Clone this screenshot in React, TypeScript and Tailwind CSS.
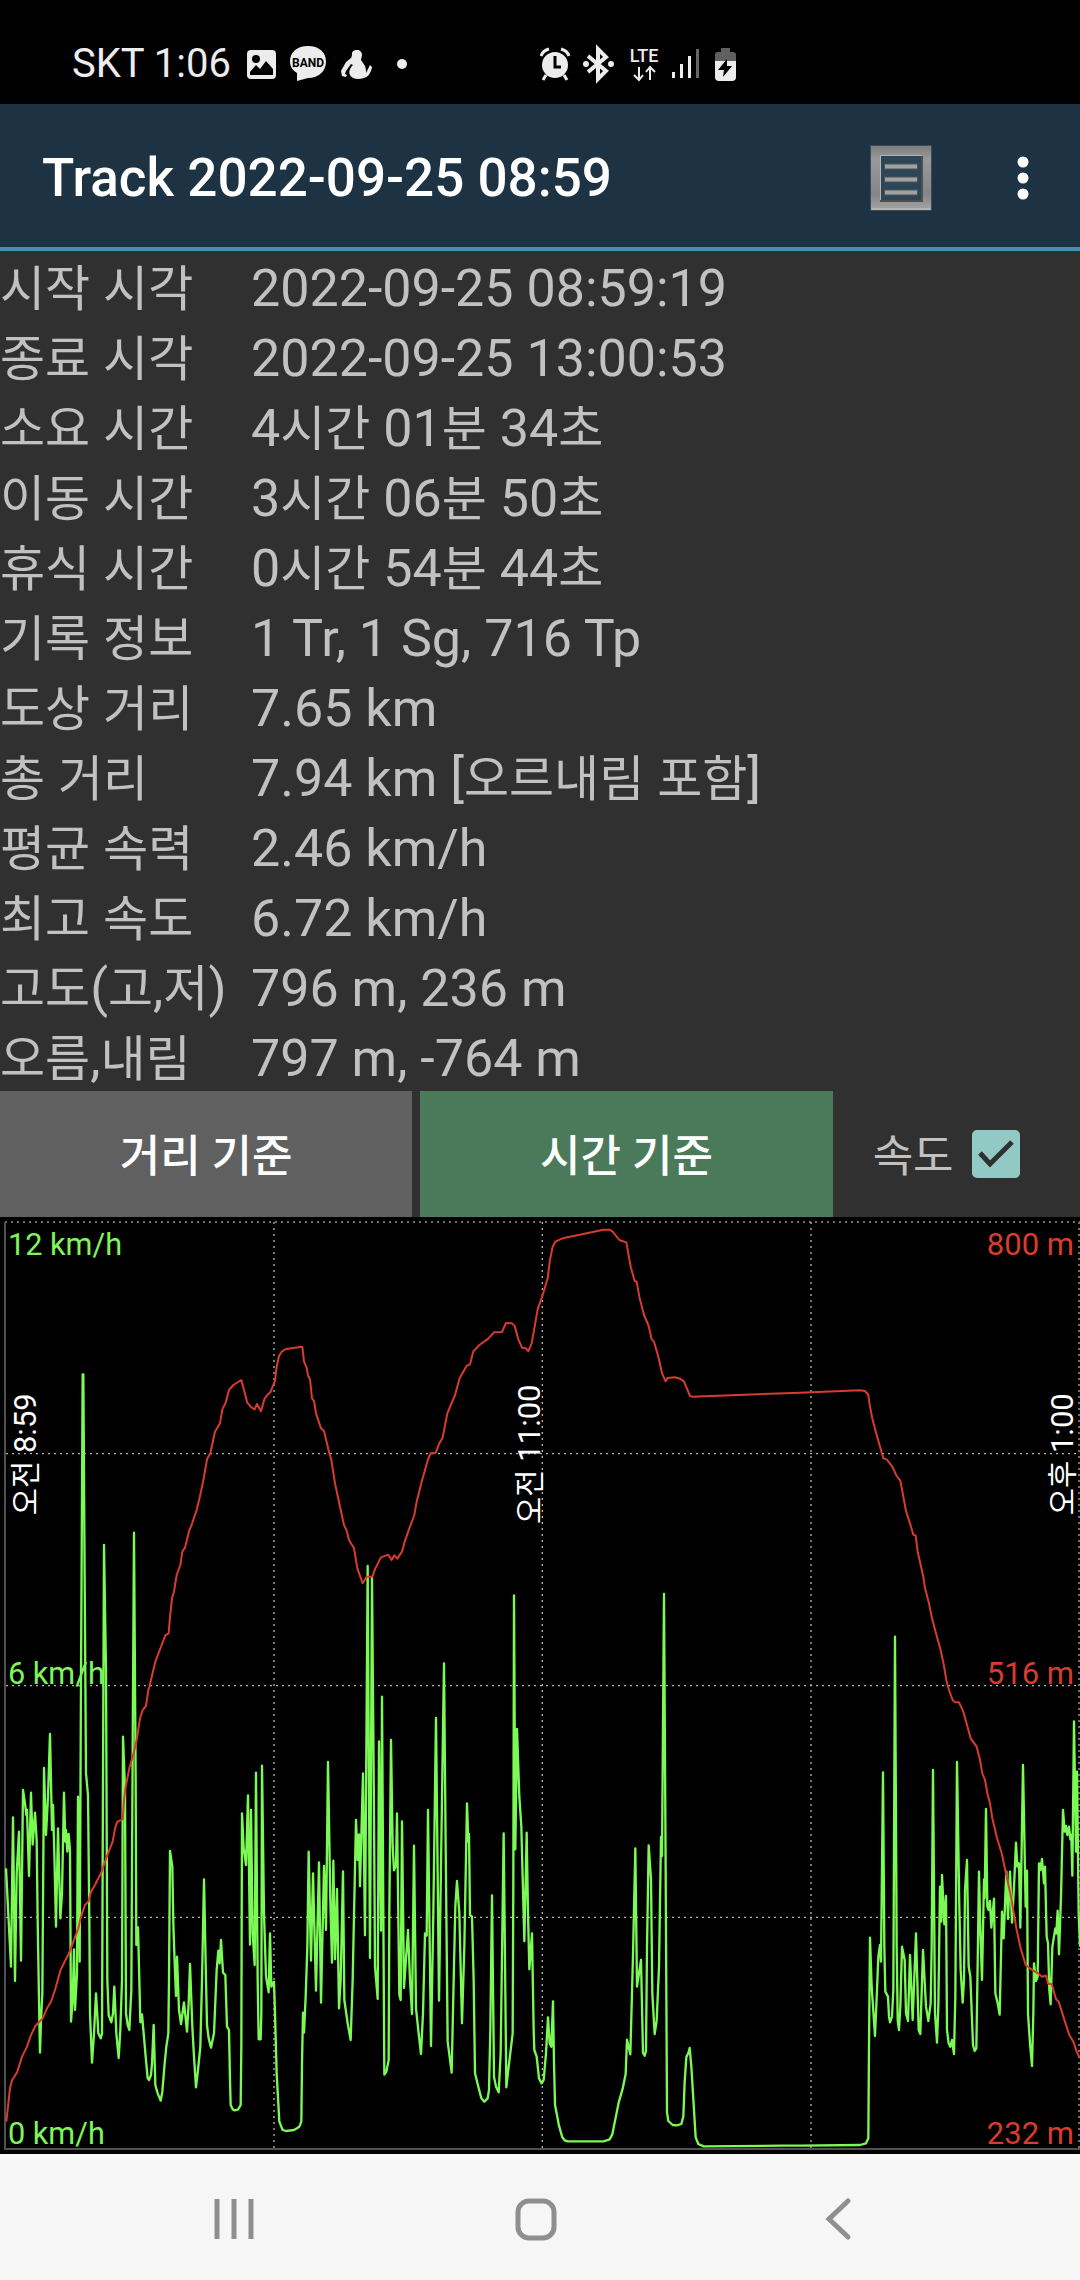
import { Fragment, useState } from "react";

const FONT = "font-['Roboto','Noto_Sans_CJK_KR',sans-serif]";

const stats: [string, string][] = [
  ["시작 시각", "2022-09-25 08:59:19"],
  ["종료 시각", "2022-09-25 13:00:53"],
  ["소요 시간", "4시간 01분 34초"],
  ["이동 시간", "3시간 06분 50초"],
  ["휴식 시간", "0시간 54분 44초"],
  ["기록 정보", "1 Tr, 1 Sg, 716 Tp"],
  ["도상 거리", "7.65 km"],
  ["총 거리", "7.94 km [오르내림 포함]"],
  ["평균 속력", "2.46 km/h"],
  ["최고 속도", "6.72 km/h"],
  ["고도(고,저)", "796 m, 236 m"],
  ["오름,내림", "797 m, -764 m"],
];

/* Hangul runs are set a little smaller than the Latin text and digits. */
function Mixed({ text }: { text: string }) {
  return (
    <>
      {text.split(/([가-힣]+)/).map((part, i) =>
        i % 2 ? (
          <span key={i} className="text-[49px] leading-none">
            {part}
          </span>
        ) : (
          <Fragment key={i}>{part}</Fragment>
        ),
      )}
    </>
  );
}

type Segment = { x: number; y: number; points: string };

/* Each segment's points are relative to its own origin in plot units. */
const speed: Segment[] = [
  {
    x: 0,
    y: 1389,
    points:
      "18,565 33,860 39,412 45,903 50,580 57,455 63,842 69,330 75,370 79,405 81,390 87,588 93,338 98,494 105,398 110,480 113,720 117,960 120,1118 123,1020 127,940 132,264 138,465 144,350 150,162 156,450 159,375 163,520 168,740 174,445 181,715 186,640 192,338 196,485 198,450 202,515 206,462 210,510 213,1025 218,960 222,808 225,990 231,880 234,350 239,845 243,-10 248,-917 250,-917 254,-300 258,280 264,345 268,720 270,1000 276,1148 282,1060 288,940 295,1060 302,1075 306,1060 309,300 312,-405 318,-30 322,900 326,1005 334,1027 339,1000 343,920 349,1060 356,1134 361,1050 366,900 369,170 375,330 378,1000 383,1035 388,1050 394,930 398,200 402,-442 407,300 409,795 414,742 418,900 421,1027 426,1003 431,1060 437,1130 443,1195 447,1200 453,1185 456,1150 461,1035 466,1215 473,1240 482,1262 487,1235 494,1150 499,1100 505,1060 507,900 510,513 517,560 520,730 524,850 528,948 531,830 537,990 543,1032 552,967 561,1055 566,970 570,852 577,1040 582,1130 588,1222 594,1170 601,1100 606,900 612,598 617,850 621,1035 626,1075 633,1103 642,1060 650,870 655,812 659,850 663,780 669,878 676,885 681,1040 687,1050 690,1200 692,1275 698,1288 704,1291 714,1289 722,1275 724,1100 726,400 731,505 738,555 744,346 750,794 753,390 758,760 764,855 768,278 773,900 776,1078 782,1078 784,1000 786,257 792,700 798,890 806,937 810,760 814,920 822,905",
  },
  {
    x: 810,
    y: 1389,
    points:
      "15,1000 20,1180 28,1325 38,1350 48,1353 72,1350 88,1340 94,1325 96,1150 99,998 102,1058 107,950 112,800 116,515 123,842 129,580 138,932 147,547 153,968 162,558 168,750 174,246 181,660 186,848 190,542 195,838 201,627 207,985 212,900 219,574 223,960 233,1030 242,1080 248,900 258,420 263,540 267,463 270,619 279,280 285,766 293,-342 300,834 306,-308 312,400 315,860 323,957 327,184 333,752 336,50 343,1184 349,1175 356,1140 358,700 363,180 368,500 372,571 378,555 381,400 388,945 392,960 396,424 402,924 414,750 420,900 426,1002 432,497 438,985 446,1060 453,1122 459,1000 465,760 470,767 474,390 483,1098 490,700 498,114 507,962 515,420 522,-50 527,500 533,1085 545,1178 551,900 556,680 561,603 568,700 576,1030 583,800 591,370 595,485 597,462 600,705 606,710 611,900 615,1180 625,1220 634,1255 643,1265 653,1255 657,1230 661,1050 666,646 672,1190 678,1220 686,1237 692,1120 701,460 709,1222 716,1160 728,1060 730,600 732,-254 736,508 741,147 748,350 754,440 763,784 770,458 774,700 778,868 786,760 791,1050 793,1110 800,1130 807,1195 815,1210 821,1200 828,1120 834,1012",
  },
  {
    x: 1620,
    y: 1389,
    points:
      "29,1090 34,1100 39,964 42,1148 45,1274 57,1337 67,1372 74,1381 83,1384 191,1384 209,1378 217,1363 236,1268 248,1226 257,1182 261,1079 271,1123 279,827 286,505 291,920 303,840 309,1119 314,1127 318,1113 321,803 326,496 333,597 337,941 344,1062 350,1022 357,861 363,471 366,528 372,-258 377,574 381,1297 385,1323 398,1335 411,1336 424,1332 430,1309 434,1205 439,1131 445,1119 449,1104 454,1159 467,1372 475,1392 491,1399 723,1397",
  },
  {
    x: 2400,
    y: 1389,
    points:
      "0,1397 180,1395 198,1390 205,1375 207,1100 210,773 215,920 225,1068 231,930 235,830 240,795 243,845 249,277 253,800 256,935 264,950 267,1010 270,1027 276,1010 280,930 285,-130 290,800 293,1020 297,1050 301,980 306,800 314,840 318,1000 324,1023 330,825 338,1020 348,760 356,1050 361,1062 369,810 378,980 385,1023 392,970 395,800 399,270 405,1000 411,1088 415,980 420,620 424,725 426,585 433,733 438,648 441,1050 446,1090 451,1100 456,1080 462,1122 466,950 471,246 478,680 482,870 488,968 492,900 495,630 501,540 506,860 511,890 519,1095 524,1113 529,1105 533,850 537,575 541,750 546,900 552,598 554,655 558,387 562,680 566,690 570,663 574,743 582,656 586,940 593,970 599,1004 606,695 611,775 619,575 624,717 630,575 636,728 642,620 648,488 652,560 657,550 661,743 669,255 677,680 681,572 684,1000 690,1090 696,1158 700,1000 702,850 708,903 713,890 717,550 721,570 726,537 732,610 735,560 740,770 744,790 748,930 752,973 757,800 766,745 769,760 773,692 777,823 783,650 789,390 794,455 798,438 802,465 807,440 811,478 814,465 817,587 822,124 828,515 831,275 836,700 840,800",
  },
];

const altitude: Segment[] = [
  {
    x: 0,
    y: 1389,
    points:
      "19,1325 25,1270 30,1225 36,1200 42,1192 52,1175 66,1130 80,1102 93,1065 106,1038 128,1015 142,983 153,965 165,930 181,872 193,847 207,820 218,790 235,745 243,710 255,675 265,665 273,635 285,615 292,600 303,580 315,545 326,515 338,485 345,445 352,425 368,418 372,360 377,320 388,265 402,215 410,180 420,115 428,90 438,78 445,30",
  },
  {
    x: 0,
    y: -21,
    points:
      "448,1430 466,1355 485,1305 496,1276 506,1270 510,1220 516,1165 522,1145 530,1095 541,1065 547,1025 555,1013 568,960 573,950 590,900 602,850 612,800 621,748 631,730 645,665 660,640 667,598 677,578 687,540 700,525 724,510 742,578 754,592 764,598 771,582 783,604 793,568 800,557 811,547 824,515",
  },
  {
    x: 810,
    y: -21,
    points:
      "15,512 20,470 27,438 36,424 48,417 97,410 102,455 110,473 114,497 120,508 126,565 132,573 138,610 153,655 162,663 178,730 184,750 195,820 210,890 222,945 230,962 237,990 252,1015 262,1075 278,1120 290,1100 307,1100 316,1075 333,1042 355,1034 365,1050 373,1036 382,1046 396,1025 404,995 420,950 433,915 440,875 455,815 474,748 482,730 497,728 508,700 518,683 532,610 555,555 569,505 590,467 600,463 610,424 628,405 655,386 672,367 696,366 708,339 725,340 734,347 745,388 756,413 768,415 775,424 785,400 803,298 818,255",
  },
  {
    x: 1620,
    y: -21,
    points:
      "23,205 30,150 38,110 46,95 68,85 130,72 190,59 208,59 218,65 238,90 259,97 272,170 284,213 290,215 298,260 312,315 326,348 335,388 342,395 355,440 366,490 377,514 382,504 405,502 420,506 432,515 450,558 456,560",
  },
  {
    x: 2400,
    y: -21,
    points:
      "0,548 180,541 195,543 205,555 210,590 218,630 230,675 250,745 260,748 277,770 290,798 301,812 310,860 318,903 330,940 340,974 347,977 353,1025 370,1100 375,1135 387,1180 396,1225 412,1285 422,1320 432,1368 440,1415",
  },
  {
    x: 2400,
    y: 1389,
    points:
      "447,30 458,60 465,67 477,67 490,95 512,175 530,200 540,240 547,280 555,300 562,340 570,370 577,415 590,470 605,520 620,590 633,650 650,750 662,805 677,855 690,865 705,875 715,880 725,890 738,887 745,912 755,912 768,957 776,965 790,1010 808,1065 820,1085 830,1115 840,1135",
  },
];

function toPoints(segments: Segment[]) {
  return segments
    .flatMap((s) =>
      s.points.split(" ").map((p) => {
        const [px, py] = p.split(",").map(Number);
        return `${px + s.x},${py + s.y}`;
      }),
    )
    .join(" ");
}

function TimeLabel({ x, y, day, time }: { x: number; y: number; day: string; time: string }) {
  return (
    <text transform={`translate(${x} ${y}) rotate(-90)`} fill="#fff" fontSize="93">
      <tspan fontSize="89">{day}</tspan> {time}
    </text>
  );
}

function Chart({ showSpeed }: { showSpeed: boolean }) {
  return (
    <svg viewBox="0 0 3240 2811" className={`block h-auto w-full bg-black ${FONT}`} role="img" aria-label="속도와 고도">
      <g fill="none" strokeDasharray="6 12">
        <path d="M15 15H3240M3237 15V2796" stroke="#6e6e6e" strokeWidth="6" />
        <path d="M18 710H3240M18 1406H3240M18 2101H3240M822 15V2796M1627 15V2796M2433 15V2796" stroke="#b4b4b4" strokeWidth="4" />
      </g>
      <path d="M15 15V2796H3240" fill="none" stroke="#505050" strokeWidth="6" />
      <g fill="none" strokeLinejoin="round">
        {showSpeed && <polyline points={toPoints(speed)} stroke="#7bf954" strokeWidth="7" />}
        <polyline points={toPoints(altitude)} stroke="#d83c2f" strokeWidth="6" />
      </g>
      <g fontSize="92" fill="#7ef55a">
        <text x="24" y="114">12 km/h</text>
        <text x="24" y="1401">6 km/h</text>
        <text x="24" y="2781">0 km/h</text>
      </g>
      <g fontSize="93" fill="#d83c2f" textAnchor="end">
        <text x="3222" y="114">800 m</text>
        <text x="3222" y="1401">516 m</text>
        <text x="3222" y="2781">232 m</text>
      </g>
      <TimeLabel x={107} y={895} day="오전" time="8:59" />
      <TimeLabel x={1620} y={921} day="오전" time="11:00" />
      <TimeLabel x={3219} y={895} day="오후" time="1:00" />
    </svg>
  );
}

function StatusBar() {
  return (
    <div className="flex h-[104px] items-center bg-black px-[72px] pt-[24px] text-[#ececec]">
      <span className="w-[175px] text-[40px] leading-[48px] whitespace-nowrap">SKT 1:06</span>
      <svg className="h-[40px] w-[165px]" viewBox="0 0 165 40" aria-hidden="true">
        <rect x="0" y="6" width="29" height="29" rx="4" fill="#ececec" />
        <circle cx="9" cy="15" r="4" fill="#000" />
        <path d="M3 31V28L9 21L13 25L19 17L26 25V31Z" fill="#000" />
        <path d="M61 2C72 2 79 8 79 17.500S72 34 61 34L50 37V29C45 26 43 22 43 17.500C43 8 50 2 61 2Z" fill="#ececec" />
        <text x="61" y="23" textAnchor="middle" fontSize="12" fontWeight="700" fill="#000">BAND</text>
        <path d="M105 10c0-3 2-4 5-4s5 2 5 5c0 2-1 3-1 5l4 6c1 3 1 5 1 7l3-6 1-2 2 2c-1 6-4 10-8 11c-6 2-12 1-14-3c-2-4 1-8 3-10l-2-1-5 7-1 3 2 1-1 2-4-1-1-5 5-9 5-4c1-2 1-3 1-5Z" fill="#ececec" />
        <circle cx="155" cy="20" r="5" fill="#ececec" />
      </svg>
      <svg className="ml-[128px] h-[40px] w-[198px]" viewBox="0 0 198 40" aria-hidden="true">
        <circle cx="15" cy="21" r="13" fill="#ececec" />
        <path d="M1 12C2 9 5 6 9 5M29 12C28 9 25 6 21 5M6 31L3 36M24 31L27 36" stroke="#ececec" strokeWidth="3" fill="none" />
        <path d="M15 12V23H21" stroke="#000" strokeWidth="3" fill="none" />
        <path d="M48 12L66 27L58 35V5L66 13L48 28" stroke="#ececec" strokeWidth="4" fill="none" />
        <circle cx="46" cy="20" r="3" fill="#ececec" />
        <circle cx="71" cy="20" r="3" fill="#ececec" />
        <text x="104" y="18" textAnchor="middle" fontSize="18" fontWeight="500" fill="#ececec">LTE</text>
        <path d="M99 23V36M94 31L99 36L103 31M110 36V23M106 28L110 23L115 28" stroke="#ececec" strokeWidth="2" fill="none" />
        <path d="M133.500 28V34M141.500 20V34M149.500 12V34" stroke="#ececec" strokeWidth="3" />
        <path d="M157.500 5V34" stroke="#666" strokeWidth="3" />
        <path d="M181 4H190V8H193Q196 8 196 11V17H175V11Q175 8 178 8H181Z" fill="#606060" />
        <path d="M175 17H196V33Q196 37 192 37H179Q175 37 175 33Z" fill="#ececec" />
        <path d="M187 15L178 26H184L183 33L192 22H187Z" fill="#000" />
      </svg>
    </div>
  );
}

function AppBar() {
  return (
    <header className="flex h-[147px] items-center border-b-[4px] border-[#4a8db5] bg-[#1d3343] pt-[4px] pr-[34px] pl-[42px]">
      <h1 className="flex-1 text-[53px] leading-[64px] font-medium whitespace-nowrap text-white">Track 2022-09-25 08:59</h1>
      <button type="button" aria-label="메모" className="p-[2px]">
        <svg className="h-[66px] w-[62px]" viewBox="0 0 62 66" aria-hidden="true">
          <defs>
            <linearGradient id="frame" x1="0" y1="0" x2="0" y2="1">
              <stop offset="0" stopColor="#7c7c7c" />
              <stop offset="0.200" stopColor="#999" />
              <stop offset="0.750" stopColor="#858585" />
              <stop offset="1" stopColor="#a4a4a4" />
            </linearGradient>
          </defs>
          <rect x="0" y="0" width="62" height="66" rx="1" fill="#3d4b55" />
          <path d="M1 1H61V65H1ZM11 11V55H51V11Z" fill="url(#frame)" fillRule="evenodd" />
          <path d="M11 11H51V55H11Z" fill="#2c4658" />
          <path d="M10.500 56V10.500H51.500" fill="none" stroke="#b5b5b5" strokeWidth="1" />
          <path d="M10 56H52V11" fill="none" stroke="#4f4f4f" strokeWidth="2" />
          <path d="M2 64H60" stroke="#c4c4c4" strokeWidth="1" />
          <path d="M14 21.500H48M14 34.500H48M14 47.500H48" stroke="#4b545a" strokeWidth="6" />
          <path d="M15 21.500H47M15 34.500H47M15 47.500H47" stroke="#a2a2a2" strokeWidth="4" />
        </svg>
      </button>
      <button type="button" aria-label="더보기" className="ml-[66px]">
        <svg className="h-[48px] w-[46px]" viewBox="0 0 46 48" fill="#fff" aria-hidden="true">
          <circle cx="23" cy="8" r="5.500" />
          <circle cx="23" cy="24" r="5.500" />
          <circle cx="23" cy="40" r="5.500" />
        </svg>
      </button>
    </header>
  );
}

export default function App() {
  const [mode, setMode] = useState<"distance" | "time">("time");
  const [showSpeed, setShowSpeed] = useState(true);

  return (
    <div className={`flex min-h-screen flex-col overflow-x-hidden bg-[#303030] ${FONT}`}>
      <StatusBar />
      <AppBar />
      <main>
        <table className="w-full table-fixed border-collapse text-left text-[52px] leading-[64px] text-[#c1c1c1]">
          <tbody>
            {stats.map(([label, value]) => (
              <tr key={label}>
                <th scope="row" className="w-[251px] p-0 pt-[6px] font-normal whitespace-nowrap">
                  <Mixed text={label} />
                </th>
                <td className="p-0 pt-[6px] whitespace-nowrap">
                  <Mixed text={value} />
                </td>
              </tr>
            ))}
          </tbody>
        </table>
        <div className="flex h-[126px]">
          <button
            type="button"
            aria-pressed={mode === "distance"}
            onClick={() => setMode("distance")}
            className={`mr-[8px] flex-[5] pt-[6px] text-[44px] font-medium text-white ${mode === "distance" ? "bg-[#4b7a5b]" : "bg-[#606060]"}`}
          >
            거리 기준
          </button>
          <button
            type="button"
            aria-pressed={mode === "time"}
            onClick={() => setMode("time")}
            className={`flex-[5] pt-[6px] text-[44px] font-medium text-white ${mode === "time" ? "bg-[#4b7a5b]" : "bg-[#606060]"}`}
          >
            시간 기준
          </button>
          <label className="flex flex-[3] items-center text-[44px] text-[#c1c1c1]">
            <span className="ml-[40px] pt-[6px] whitespace-nowrap">속도</span>
            <span className="relative ml-[18px] h-[48px] w-[48px]">
              <input
                type="checkbox"
                checked={showSpeed}
                onChange={(e) => setShowSpeed(e.target.checked)}
                className="block h-[48px] w-[48px] appearance-none rounded-[5px] border-4 border-[#c1c1c1] checked:border-[#92c9c5] checked:bg-[#92c9c5]"
              />
              {showSpeed && (
                <svg className="pointer-events-none absolute inset-0" viewBox="0 0 48 48" fill="none" aria-hidden="true">
                  <path d="M8 23L18 34L40 12" stroke="#303030" strokeWidth="5" />
                </svg>
              )}
            </span>
          </label>
        </div>
        <Chart showSpeed={showSpeed} />
      </main>
      <nav className="grid min-h-[126px] flex-1 grid-cols-3 bg-[#f6f6f6] pt-[4px] pr-[91px] pl-[83px]">
        <button type="button" aria-label="최근 앱" className="flex items-center justify-center">
          <svg className="h-[44px] w-[44px]" viewBox="0 0 44 44" stroke="#8f8f8f" strokeWidth="5" aria-hidden="true">
            <path d="M5 2V42M22 2V42M39 2V42" />
          </svg>
        </button>
        <button type="button" aria-label="홈" className="flex items-center justify-center">
          <svg className="h-[44px] w-[44px]" viewBox="0 0 44 44" fill="none" stroke="#8f8f8f" strokeWidth="5" aria-hidden="true">
            <rect x="4" y="4" width="36" height="37" rx="11" />
          </svg>
        </button>
        <button type="button" aria-label="뒤로" className="flex items-center justify-center">
          <svg className="h-[44px] w-[44px]" viewBox="0 0 44 44" fill="none" stroke="#8f8f8f" strokeWidth="5" aria-hidden="true">
            <path d="M32 4L13 22L32 40" strokeLinecap="round" />
          </svg>
        </button>
      </nav>
    </div>
  );
}
